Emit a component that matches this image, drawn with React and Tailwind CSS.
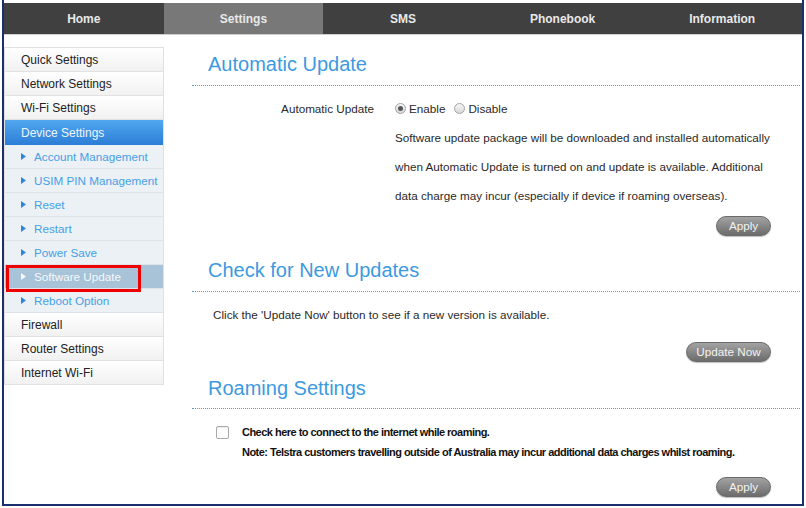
import React from "react";

const font = { fontFamily: '"Liberation Sans", Arial, sans-serif' };

function Arrow({ color = "#2f86d6" }) {
  return (
    <svg width="5" height="7" viewBox="0 0 5 7" className="shrink-0">
      <polygon points="0,0 5,3.5 0,7" fill={color} />
    </svg>
  );
}

function MainItem({ label }) {
  return (
    <div className="h-[24px] border-b border-[#e2e2e2] bg-gradient-to-b from-white to-[#f1f1f1] pl-[16px] flex items-center text-[12px] text-[#222]">
      {label}
    </div>
  );
}

function SubItem({ label, active }) {
  return (
    <div
      className={
        "h-[24px] border-b border-[#dde3e8] pl-[16px] flex items-center gap-[8px] text-[11.7px] " +
        (active ? "bg-[#a8c3d7] text-[#f4f8fb]" : "bg-[#ecf1f5] text-[#45a0e6]")
      }
    >
      <Arrow color={active ? "#f4f8fb" : "#2f86d6"} />
      <span>{label}</span>
    </div>
  );
}

function Btn({ children, w }) {
  return (
    <button
      className={
        "h-[20px] rounded-full border border-[#6a6a6a] bg-gradient-to-b from-[#a3a3a3] to-[#6c6c6c] text-[11.7px] text-[#f2f2f2] leading-[18px] shadow-[0_1px_1px_rgba(0,0,0,0.25)] " +
        w
      }
      style={font}
    >
      {children}
    </button>
  );
}

function Heading({ children, pt }) {
  return (
    <div className={"border-b border-dotted border-[#4a9fe0] " + pt}>
      <div className="pl-[16px] text-[20px] leading-[24px] text-[#3d9ae0]">{children}</div>
    </div>
  );
}

function Radio({ checked, label }) {
  return (
    <span className="inline-flex items-center gap-[3px]">
      <span className="w-[11px] h-[11px] rounded-full border border-[#a3a3a3] bg-gradient-to-b from-[#f6f6f6] to-[#d9d9d9] flex items-center justify-center">
        {checked && <span className="w-[5px] h-[5px] rounded-full bg-[#555]" />}
      </span>
      <span>{label}</span>
    </span>
  );
}

export default function App() {
  const tabs = ["Home", "Settings", "SMS", "Phonebook", "Information"];
  return (
    <div className="w-[806px] h-[508px] bg-white overflow-hidden" style={font}>
      <div className="ml-[2px] w-[802px] h-[506px] border-l-2 border-r-2 border-b-2 border-[#1b2f6e] pt-[3px] flex flex-col">
        <div className="h-[32px] flex bg-[#404040] border-b border-[#cfcfcf]">
          {tabs.map((t) => (
            <div
              key={t}
              className={
                "flex-1 flex items-center justify-center text-[12px] font-bold text-[#e8e8e8] " +
                (t === "Settings" ? "bg-[#787878]" : "")
              }
            >
              {t}
            </div>
          ))}
        </div>
        <div className="flex flex-1">
          <div className="w-[160px] shrink-0 pt-[12px]">
            <div className="relative border-x border-t border-[#e0e0e0]">
              <MainItem label="Quick Settings" />
              <MainItem label="Network Settings" />
              <MainItem label="Wi-Fi Settings" />
              <div className="h-[25px] bg-gradient-to-b from-[#52a8ef] to-[#2b7dd6] pl-[16px] flex items-center text-[12px] text-[#eef5fd]">
                Device Settings
              </div>
              <SubItem label="Account Management" />
              <SubItem label="USIM PIN Management" />
              <SubItem label="Reset" />
              <SubItem label="Restart" />
              <SubItem label="Power Save" />
              <SubItem label="Software Update" active />
              <SubItem label="Reboot Option" />
              <MainItem label="Firewall" />
              <MainItem label="Router Settings" />
              <MainItem label="Internet Wi-Fi" />
              <div className="absolute left-[1px] top-[217px] w-[135px] h-[27px] border-[3px] border-[#ee0000]" />
            </div>
          </div>
          <div className="flex-1 pl-[28px] pr-[2px] text-[11.7px] text-[#2a2a2a]">
            <Heading pt="pt-[17px] pb-[9px]">Automatic Update</Heading>
            <div className="mt-[8px] flex">
              <div className="w-[182px] text-right leading-[29px]">Automatic Update</div>
              <div className="ml-[21px]">
                <div className="h-[29px] flex items-center gap-[9px]">
                  <Radio checked label="Enable" />
                  <Radio label="Disable" />
                </div>
                <div className="leading-[29px]">
                  <div>Software update package will be downloaded and installed automatically</div>
                  <div>when Automatic Update is turned on and update is available. Additional</div>
                  <div>data charge may incur (especially if device if roaming overseas).</div>
                </div>
              </div>
            </div>
            <div className="mt-[6px] flex justify-end pr-[29px]">
              <Btn w="w-[55px]">Apply</Btn>
            </div>

            <Heading pt="pt-[22px] pb-[9px]">Check for New Updates</Heading>
            <div className="mt-[8px] pl-[21px] leading-[29px]">
              Click the 'Update Now' button to see if a new version is available.
            </div>
            <div className="mt-[13px] flex justify-end pr-[29px]">
              <Btn w="w-[85px]">Update Now</Btn>
            </div>

            <Heading pt="pt-[14px] pb-[8px]">Roaming Settings</Heading>
            <div className="mt-[13px] text-[11px] font-bold text-[#111] tracking-[-0.52px]">
              <div className="h-[20px] flex items-center pl-[24px]">
                <span className="w-[13px] h-[13px] border border-[#a9a9a9] rounded-[2px] bg-white shadow-[inset_0_1px_1px_rgba(0,0,0,0.08)]" />
                <span className="ml-[13px]">Check here to connect to the internet while roaming.</span>
              </div>
              <div className="h-[20px] flex items-center pl-[50px]">
                Note: Telstra customers travelling outside of Australia may incur additional data charges whilst roaming.
              </div>
            </div>
            <div className="mt-[15px] flex justify-end pr-[29px]">
              <Btn w="w-[55px]">Apply</Btn>
            </div>
          </div>
        </div>
      </div>
    </div>
  );
}
